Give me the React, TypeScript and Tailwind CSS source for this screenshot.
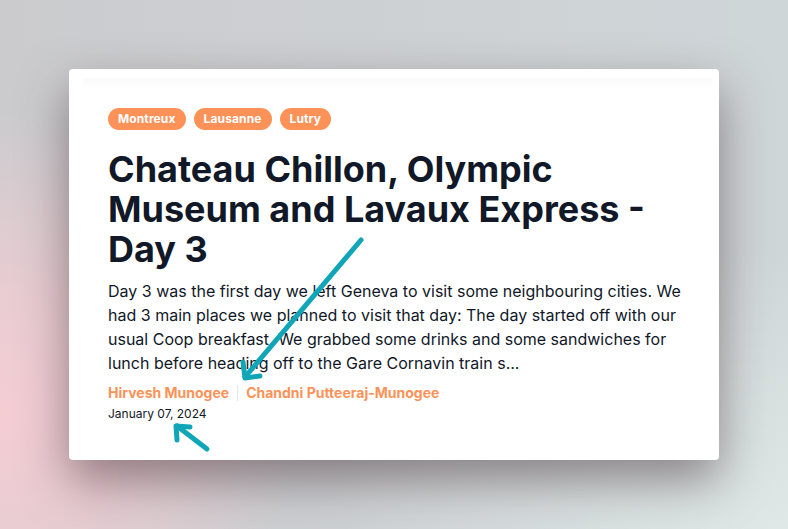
import React from "react";

const tags = ["Montreux", "Lausanne", "Lutry"];

function Arrows() {
  return (
    <svg
      className="pointer-events-none absolute inset-0"
      width="788"
      height="529"
      viewBox="0 0 788 529"
      fill="none"
      stroke="#10a6b7"
      strokeWidth="5"
      strokeLinecap="round"
      strokeLinejoin="round"
    >
      <path d="M361 240 L245 377" />
      <path d="M243 362 L245 378 L260 376" />
      <path d="M207 449 L177 426" />
      <path d="M177 440 L176 426 L190 427" />
    </svg>
  );
}

export default function App() {
  return (
    <div
      className="relative flex h-[529px] w-[788px] items-start overflow-hidden bg-[#d0d2d4] bg-[radial-gradient(ellipse_300px_300px_at_0%_78%,#f4cdd3_0%,rgba(242,205,211,0.75)_40%,rgba(242,205,211,0)_100%),radial-gradient(ellipse_460px_280px_at_100%_100%,#dfe8e7_0%,rgba(223,232,231,0)_100%),linear-gradient(90deg,#cbcbce_0%,#ced2d5_60%,#cfd6d8_100%)] pl-[69px] pt-[69px]"
      style={{ fontFamily: "Inter, 'Noto Sans', sans-serif" }}
    >
      <article className="flex h-[391px] w-[650px] flex-col rounded-[4px] bg-white pl-[39px] pr-[25px] pt-[9px] shadow-[0_20px_48px_rgba(60,40,45,0.5)]">
        <div className="-ml-[25px] mr-[-18px] h-3 bg-gradient-to-b from-[#fafafa] to-white" />
        <div className="mt-[18px] flex gap-2">
          {tags.map((t) => (
            <span
              key={t}
              className="flex h-[22px] items-center rounded-full bg-[#fd9259] px-[10px] text-xs font-bold tracking-[0.01em] text-white"
            >
              {t}
            </span>
          ))}
        </div>
        <h1 className="mt-[19px] text-4xl font-bold leading-10 text-[#111827]">
          Chateau Chillon, Olympic Museum and Lavaux Express - Day 3
        </h1>
        <p className="mt-[10px] text-base leading-6 text-[#111827]">
          Day 3 was the first day we left Geneva to visit some neighbouring
          cities. We had 3 main places we planned to visit that day: The day
          started off with our usual Coop breakfast. We grabbed some drinks and
          some sandwiches for lunch before heading off to the Gare Cornavin
          train s...
        </p>
        <div className="mt-[8px] flex items-center text-sm font-bold text-[#fd9259]">
          <span>Hirvesh Munogee</span>
          <span className="mx-2 h-4 w-px bg-[#e5e7eb]" />
          <span>Chandni Putteeraj-Munogee</span>
        </div>
        <div className="mt-[3px] text-xs text-[#111827]">January 07, 2024</div>
      </article>
      <Arrows />
    </div>
  );
}
